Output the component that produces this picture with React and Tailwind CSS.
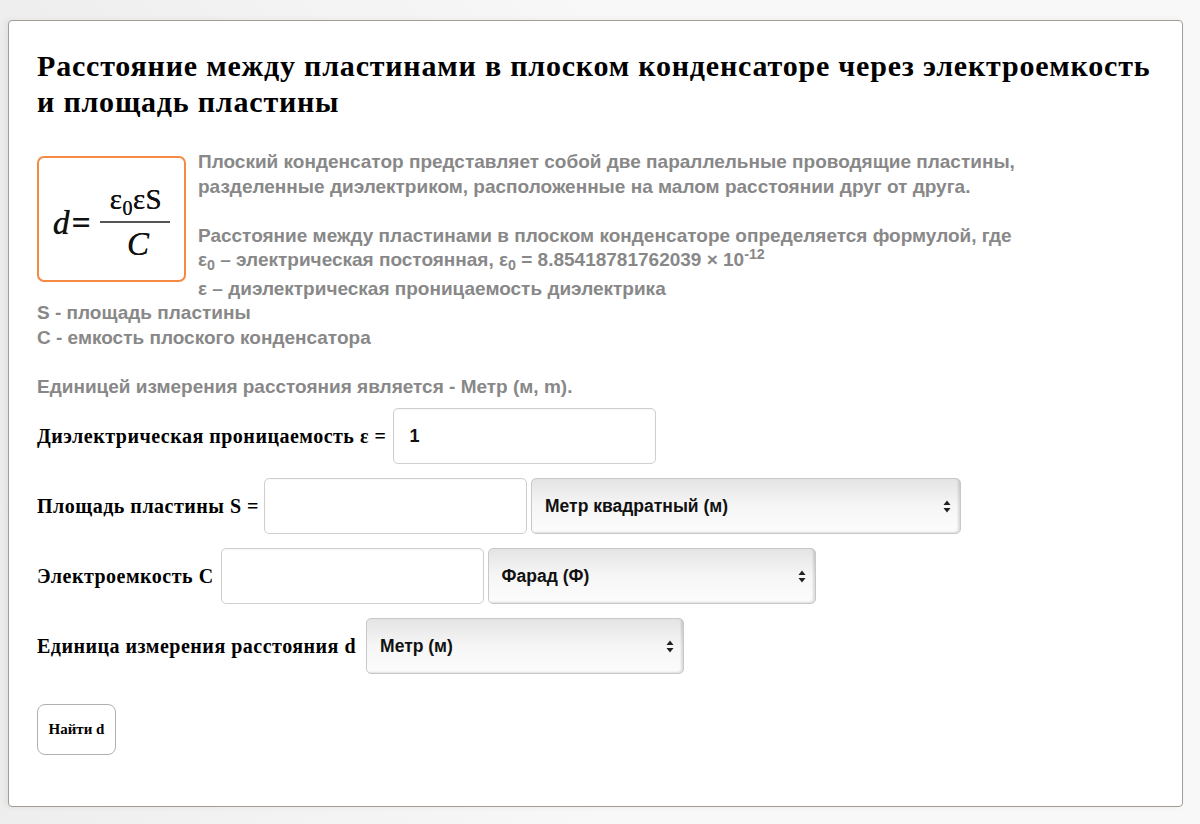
import React from "react";

function Arrows() {
  return (
    <svg width="8" height="13" viewBox="0 0 8 13" className="shrink-0">
      <path d="M4 0.5 L7.5 5 L0.5 5 Z" fill="#222" />
      <path d="M4 12.5 L7.5 8 L0.5 8 Z" fill="#222" />
    </svg>
  );
}

function Select({ label, className }) {
  return (
    <div
      className={`flex items-center justify-between h-[56px] shrink-0 rounded-[5px] border border-[#c8c8c8] pl-[13px] pr-[9px] bg-gradient-to-b from-[#e4e4e4] via-[#f6f6f6] to-[#fcfcfc] shadow-[inset_-2px_-1px_2px_rgba(0,0,0,0.12)] font-['Liberation_Sans',Arial,sans-serif] ${className}`}
    >
      <span className="text-[17.5px] font-bold text-[#111]">{label}</span>
      <Arrows />
    </div>
  );
}

function Input({ value, className }) {
  return (
    <div
      className={`flex items-center w-[263px] h-[56px] shrink-0 rounded-[5px] border border-[#cfcfcf] bg-white px-[15px] shadow-[inset_0_1px_2px_rgba(0,0,0,0.04)] font-['Liberation_Sans',Arial,sans-serif] ${className}`}
    >
      <span className="text-[18px] font-bold text-[#111]">{value}</span>
    </div>
  );
}

function Formula() {
  return (
    <div className="float-left mt-[6px] mr-[12px] mb-[12px] w-[149px] h-[126px] rounded-[7px] border-2 border-[#f58a45] bg-white flex items-center justify-center">
      <div className="flex items-center mt-[8px] text-[#111] font-normal tracking-normal font-['Liberation_Serif',serif]">
        <span className="italic text-[33px] leading-none [text-shadow:0_0_0.7px_#111]">d</span>
        <span className="text-[34px] leading-none ml-[2px] font-bold">=</span>
        <div className="flex flex-col items-center ml-[9px]">
          <div className="text-[29px] leading-none pl-[2px] tracking-[0.5px] [text-shadow:0_0_0.6px_#111]">
            ε<span className="text-[20px] relative top-[6px]">0</span>εS
          </div>
          <div className="w-[70px] h-[1.5px] bg-[#555] mt-[7px] mb-[5px]" />
          <div className="italic text-[33px] leading-none pl-[6px] [text-shadow:0_0_0.6px_#111]">C</div>
        </div>
      </div>
    </div>
  );
}

export default function App() {
  return (
    <div className="min-h-[824px] bg-gradient-to-r from-[#eeeeee] via-[#f8f8f8] to-[#f8f8f8] pt-[20px] pl-[8px] pr-[17px] pb-[17px]">
      <div className="h-[787px] rounded-[4px] border border-[#a49d96] bg-white pt-[27px] pl-[28px] pr-[20px] shadow-[-3px_0_6px_rgba(0,0,0,0.06)]">
        <div className="font-['Liberation_Serif',serif] text-[30px] leading-[36px] font-bold tracking-[0.8px] text-black">
          Расстояние между пластинами в плоском конденсаторе через электроемкость и площадь пластины
        </div>
        <div className="mt-[30px] pr-[40px] text-[19px] leading-[24.5px] font-bold text-[#888888] font-['Liberation_Sans',Arial,sans-serif]">
          <Formula />
          <div>
            Плоский конденсатор представляет собой две параллельные проводящие пластины, разделенные диэлектриком, расположенные на малом расстоянии друг от друга.
          </div>
          <div className="h-[24.5px]" />
          <div>Расстояние между пластинами в плоском конденсаторе определяется формулой, где</div>
          <div className="pb-[4px]">
            ε<sub>0</sub> – электрическая постоянная, ε<sub>0</sub> = 8.85418781762039 × 10<sup>-12</sup>
          </div>
          <div>ε – диэлектрическая проницаемость диэлектрика</div>
          <div>S - площадь пластины</div>
          <div>C - емкость плоского конденсатора</div>
          <div className="h-[24.5px]" />
          <div>Единицей измерения расстояния является - Метр (м, m).</div>
        </div>
        <div className="mt-[9px] flex flex-col gap-[14px] font-['Liberation_Serif',serif] text-[20px] font-bold tracking-[0.5px] text-black">
          <div className="flex items-center">
            <span>Диэлектрическая проницаемость ε =</span>
            <Input value="1" className="ml-[7px]" />
          </div>
          <div className="flex items-center">
            <span>Площадь пластины S =</span>
            <Input value="" className="ml-[5px]" />
            <Select label="Метр квадратный (м)" className="w-[430px] ml-[4px] tracking-normal" />
          </div>
          <div className="flex items-center">
            <span>Электроемкость C</span>
            <Input value="" className="ml-[7px]" />
            <Select label="Фарад (Ф)" className="w-[328px] ml-[4px] tracking-normal" />
          </div>
          <div className="flex items-center">
            <span>Единица измерения расстояния d</span>
            <Select label="Метр (м)" className="w-[318px] ml-[10px] tracking-normal" />
          </div>
        </div>
        <button className="mt-[30px] w-[79px] h-[51px] rounded-[8px] border border-[#b0b0b0] bg-white text-[15px] font-bold text-black font-['Liberation_Serif',serif]">
          Найти d
        </button>
      </div>
    </div>
  );
}
